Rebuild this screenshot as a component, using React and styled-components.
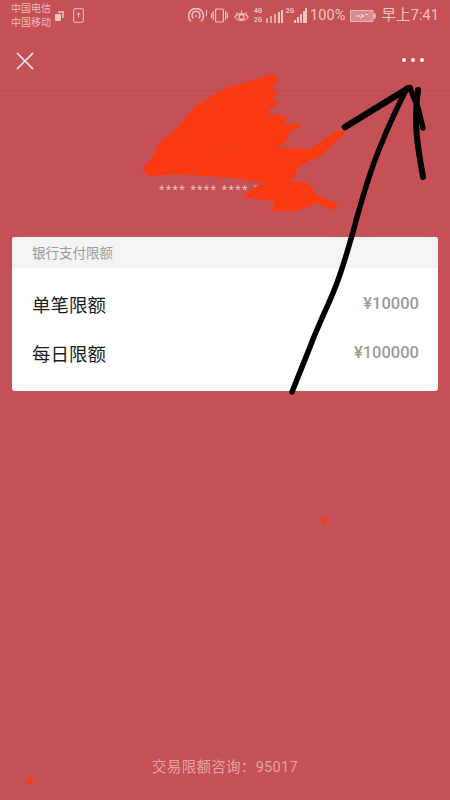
import React from "react";
import styled, { createGlobalStyle } from "styled-components";

const Global = createGlobalStyle`
  html, body { margin: 0; padding: 0; background: #c55056; }
  body { font-family: "Roboto", "Noto Sans CJK SC", "Liberation Sans", sans-serif; }
`;
const Page = styled.div`
  position: relative; width: 450px; height: 800px; overflow: hidden;
  background: #c55056; display: flex; flex-direction: column;
`;
const StatusBar = styled.div`
  height: 31px; padding: 0 11px; display: flex; align-items: center; justify-content: space-between;
  color: #f0c4c4;
`;
const Left = styled.div`display: flex; align-items: center;`;
const Carriers = styled.div`font-size: 10px; line-height: 14px; color: #eebcbc; width: 43px; margin-top: 1px;`;
const Right = styled.div`display: flex; align-items: center;`;
const StatusText = styled.span`
  font-size: 14.5px; line-height: 18px; color: #f0c4c4; white-space: nowrap; letter-spacing: 0.1px;
  margin-left: ${p => p.$ml || 0}px; margin-top: 1px;
`;
const IconSlot = styled.svg`
  display: block; flex: none; margin-left: ${p => p.$ml || 0}px;
`;
const Nav = styled.div`
  height: 59px; padding: 0 15px; display: flex; align-items: center; justify-content: space-between;
  border-bottom: 1px solid #bf4a50;
`;
const Dots = styled.div`display: flex; gap: 5px; margin-right: 11px; margin-top: -1px;`;
const Dot = styled.span`width: 4px; height: 4px; border-radius: 50%; background: #fff;`;
const CardNumber = styled.div`
  margin: 91px 0 0 159px; font-size: 12.5px; line-height: 16px; height: 15px; color: #edbcbc; letter-spacing: 1.35px;
`;
const Card = styled.section`
  margin: 40px 12px 0; height: 154px; background: #fff; border-radius: 3px; overflow: hidden;
`;
const CardHeader = styled.div`
  height: 31px; background: #f4f4f4; padding-left: 20px; display: flex; align-items: center;
  font-size: 13.5px; color: #9a9a9a; padding-bottom: 1px; box-sizing: border-box;
`;
const Rows = styled.div`padding: 11px 19px 0 20px;`;
const Row = styled.div`
  height: 49px; display: flex; justify-content: space-between; align-items: center;
`;
const RowLabel = styled.span`font-size: 18.5px; color: #1c1c1c;`;
const RowValue = styled.span`font-size: 16.5px; font-weight: 500; color: #9b9b9b; margin-top: -1px;`;
const Footer = styled.div`
  margin-top: auto; padding-bottom: 23px; text-align: center; font-size: 14.5px; line-height: 18px; color: #e6a3a5; letter-spacing: 0.3px;
`;
const Overlay = styled.svg`
  position: absolute; left: 0; top: 0; width: 450px; height: 800px; pointer-events: none;
`;

const Sim = () => (
  <IconSlot width="11" height="12" viewBox="0 0 11 12">
    <path d="M4 1h6v7H8V3H4z" fill="#f0c4c4" opacity=".75" />
    <rect x="1" y="4" width="6" height="7" rx="1" fill="#f0c4c4" />
  </IconSlot>
);
const PhoneUp = () => (
  <IconSlot $ml={8} width="11" height="15" viewBox="0 0 11 15" fill="none" stroke="#f0c4c4">
    <rect x=".7" y=".7" width="9.6" height="13.6" rx="1" />
    <path d="M5.5 9.500V5M3.800 6.600 5.500 4.800l1.700 1.800" />
  </IconSlot>
);
const Hotspot = () => (
  <IconSlot width="22" height="16" viewBox="0 0 22 16" fill="none" stroke="#f0c4c4" strokeWidth="1.5">
    <path d="M3 13.500A7.500 7.500 0 1 1 13 13.500" />
    <path d="M5.600 10.500a4 4 0 1 1 4.800 0" />
    <circle cx="8" cy="8" r="1" fill="#f0c4c4" stroke="none" />
    <path d="M18.500 2v6" strokeWidth="1" />
  </IconSlot>
);
const Vibrate = () => (
  <IconSlot $ml={1} width="17" height="15" viewBox="0 0 17 15" fill="none" stroke="#f0c4c4" strokeWidth="1.2">
    <rect x="4.600" y="1" width="7.800" height="13" rx="1" />
    <path d="M2.300 3v9M.6 5v5M14.700 3v9M16.400 5v5" />
  </IconSlot>
);
const Eye = () => (
  <IconSlot $ml={6} width="15" height="14" viewBox="0 0 15 14" fill="none" stroke="#f0c4c4" strokeWidth="1.2">
    <path d="M.8 8c3.500-4.600 9.900-4.600 13.400 0-3.500 4.600-9.900 4.600-13.400 0z" />
    <circle cx="7.500" cy="8" r="2.400" />
    <path d="M2.500 3.500 3.500 5M7.500 1.500v2M12.500 3.500l-1 1.500" />
  </IconSlot>
);
const Signal = ({ ml, tags, dots }) => (
  <IconSlot $ml={ml} width={dots ? 29 : 21} height="15" viewBox={`0 0 ${dots ? 29 : 21} 15`}>
    {(dots ? [12, 16, 20, 24, 27] : [8, 11, 14, 17, 19]).map((x, i) => (
      <rect key={i} x={x} y={dots ? 10 - i * 2 : 12 - i * 3} width="2" height={dots ? 5 + i * 2 : 3 + i * 3} fill="#f0c4c4" opacity={dots && i < 3 ? 0.75 : 1} />
    ))}
    {tags.map((t, i) => (
      <text key={t} x="0" y={dots ? 5 + i * 9 : 5} fontSize="6.500" fontWeight="700" fill="#f0c4c4" fontFamily="Roboto, sans-serif">{t}</text>
    ))}
  </IconSlot>
);
const Battery = () => (
  <IconSlot $ml={5} width="26" height="12" viewBox="0 0 26 12">
    <rect x=".5" y=".5" width="22.500" height="11" fill="#d98c8e" stroke="#f0c4c4" strokeWidth=".8" />
    <rect x="23.600" y="3.500" width="2" height="5" fill="#f0c4c4" />
    <path d="M6 6h4M12 6h2M11 4l2 2-3 2M15 4.500h3" stroke="#fbe6e6" strokeWidth="1" fill="none" />
  </IconSlot>
);
const Close = () => (
  <IconSlot width="20" height="20" viewBox="0 0 20 20" stroke="#f7e6e6" strokeWidth="1.7" fill="none">
    <path d="M2 2l16 16M18 2 2 18" />
  </IconSlot>
);

const scribble = "40,300 80,250 85,225 140,180 200,110 280,60 430,15 440,30 410,60 442,60 420,90 440,100 400,130 470,145 450,165 510,165 470,190 470,210 430,235 540,240 630,180 640,190 570,255 500,290 490,320 460,335 530,340 560,380 620,405 610,417 560,395 500,420 425,420 440,390 345,380 380,350 420,335 300,320 150,310 60,315";

export default function App() {
  return (
    <Page>
      <Global />
      <StatusBar>
        <Left>
          <Carriers>中国电信<br />中国移动</Carriers>
          <Sim />
          <PhoneUp />
        </Left>
        <Right>
          <Hotspot />
          <Vibrate />
          <Eye />
          <Signal ml={5} dots tags={["4G", "2G"]} />
          <Signal ml={3} tags={["2G"]} />
          <StatusText $ml={3}>100%</StatusText>
          <Battery />
          <StatusText $ml={5}>早上7:41</StatusText>
        </Right>
      </StatusBar>
      <Nav>
        <Close />
        <Dots><Dot /><Dot /><Dot /></Dots>
      </Nav>
      <CardNumber>**** **** **** 0</CardNumber>
      <Card>
        <CardHeader>银行支付限额</CardHeader>
        <Rows>
          <Row><RowLabel>单笔限额</RowLabel><RowValue>¥10000</RowValue></Row>
          <Row><RowLabel>每日限额</RowLabel><RowValue>¥100000</RowValue></Row>
        </Rows>
      </Card>
      <Footer>交易限额咨询：95017</Footer>
      <Overlay viewBox="0 0 450 800">
        <g transform="translate(130 70) scale(.3333)">
          <polygon points={scribble} fill="#fb3a12" stroke="#fb3a12" strokeWidth="6" strokeLinejoin="round" />
          <path d="M225 125l25-22M340 155l8-3M225 245c40 5 75-5 100-35" stroke="#c55056" strokeWidth="3" fill="none" opacity=".6" />
        </g>
        <g fill="none" stroke="#000" strokeLinecap="round" strokeLinejoin="round">
          <path strokeWidth="5.500" d="M292 392C300 372 304 362 310 347C318 326 325 312 333 293C342 272 347 252 353 232C362 198 372 165 383 140C391 120 399 104 407 88" />
          <path strokeWidth="6.500" d="M345 127 407 89 410 88" />
          <path strokeWidth="5.500" d="M410 88 418 108 423 128" />
          <path strokeWidth="6" d="M418 90C416 105 415 120 417 137C418 150 421 165 423 177" />
        </g>
        <circle cx="324.500" cy="521" r="3" fill="#fb3a12" />
        <circle cx="30" cy="781" r="3" fill="#fb3a12" />
      </Overlay>
    </Page>
  );
}
